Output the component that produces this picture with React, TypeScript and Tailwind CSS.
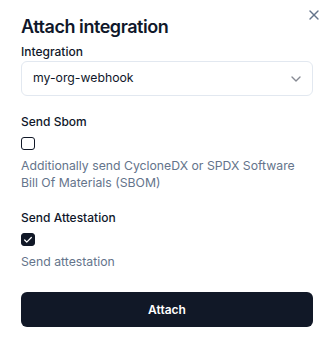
import React, { useState } from 'react';
import { X, ChevronDown, Check } from 'lucide-react';

function CheckBox({ checked, onChange }: { checked: boolean; onChange: (v: boolean) => void }) {
  return (
    <button
      type="button"
      onClick={() => onChange(!checked)}
      className={`flex h-[13px] w-[14px] items-center justify-center rounded-[3px] border border-[#111827] ${
        checked ? 'bg-[#111827] text-white' : 'bg-white'
      }`}
    >
      {checked && <Check size={10} strokeWidth={3} />}
    </button>
  );
}

export default function App() {
  const [sbom, setSbom] = useState(false);
  const [attestation, setAttestation] = useState(true);

  return (
    <div
      className="relative h-[339px] w-[327px] bg-white pl-[21px] pr-[14px] text-[#0f172a]"
      style={{ fontFamily: 'Inter, "Noto Sans", sans-serif' }}
    >
      <button className="absolute left-[306px] top-[7px] text-[#64748b]">
        <X size={16} strokeWidth={2} />
      </button>

      <h2 className="pt-[18px] text-[18px] font-semibold leading-none tracking-tight">
        Attach integration
      </h2>

      {/* Integration */}
      <label className="mt-[10px] block text-[12px] font-medium leading-none">Integration</label>
      <div className="mt-[3px] flex h-[35px] items-center justify-between rounded-md border border-[#e2e8f0] pl-[11px] pr-[8px]">
        <span className="text-[12.25px] leading-none">my-org-webhook</span>
        <ChevronDown size={16} className="opacity-50" />
      </div>

      {/* Send Sbom */}
      <label className="mt-[20px] block text-[12px] font-medium leading-none">Send Sbom</label>
      <div className="mt-[9px] flex">
        <CheckBox checked={sbom} onChange={setSbom} />
      </div>
      <p className="mt-[7px] text-[12.25px] leading-[17px] text-[#64748b]">
        Additionally send CycloneDX or SPDX Software Bill Of Materials (SBOM)
      </p>

      {/* Send Attestation */}
      <label className="mt-[21px] block text-[12px] font-medium leading-none">Send Attestation</label>
      <div className="mt-[9px] flex">
        <CheckBox checked={attestation} onChange={setAttestation} />
      </div>
      <p className="mt-[7px] text-[12.25px] leading-[17px] text-[#64748b]">Send attestation</p>

      <button className="mt-[22px] flex h-[35px] w-full items-center justify-center rounded-md bg-[#111827] text-[12px] font-semibold text-white">
        Attach
      </button>
    </div>
  );
}
